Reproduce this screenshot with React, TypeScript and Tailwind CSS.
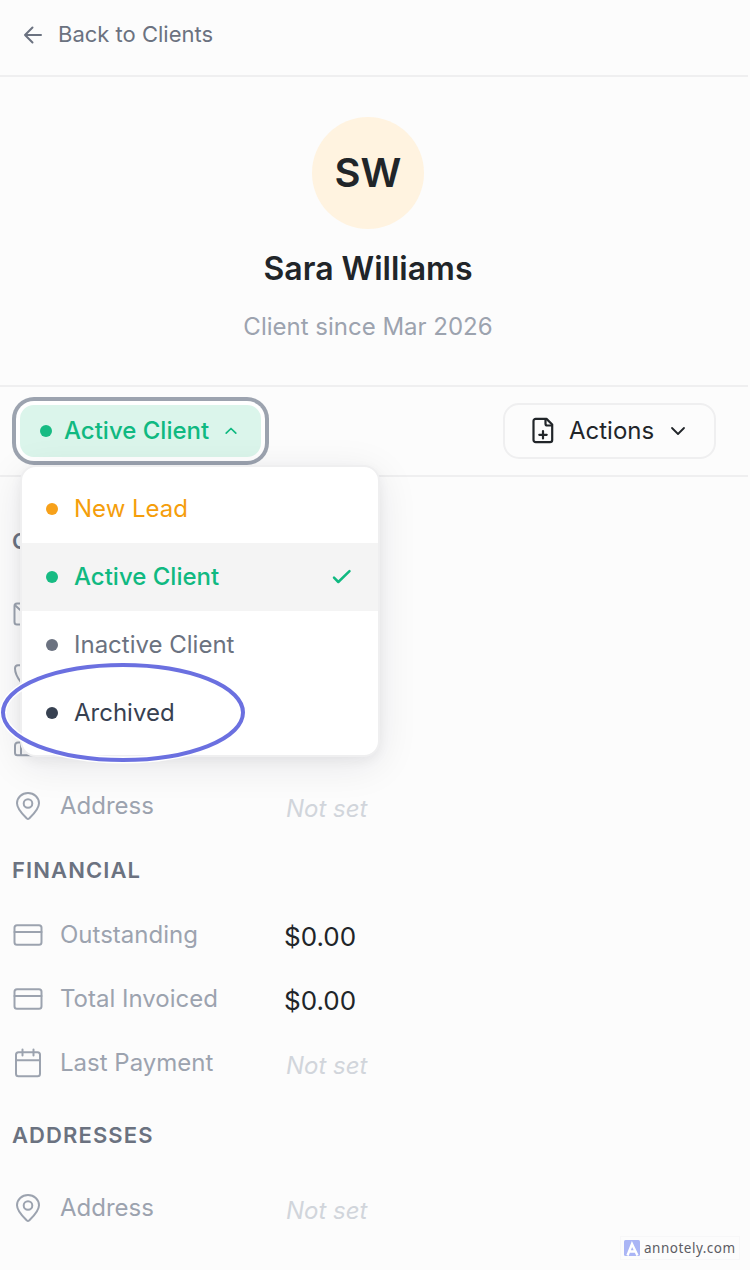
import React from 'react';

type IconProps = { className?: string };

const Svg: React.FC<{ size?: number; stroke?: number; className?: string; children: React.ReactNode }> = ({
  size = 32,
  stroke = 2,
  className,
  children,
}) => (
  <svg
    width={size}
    height={size}
    viewBox={`0 0 ${size} ${size}`}
    fill="none"
    stroke="currentColor"
    strokeWidth={stroke}
    strokeLinecap="round"
    strokeLinejoin="round"
    className={className}
    aria-hidden="true"
  >
    {children}
  </svg>
);

const PinIcon: React.FC<IconProps> = (props) => (
  <Svg {...props}>
    <path d="M15 28.600C13 26.500 5 19.700 5 13.300a11 10.300 0 0 1 22 0c0 6.400-8 13.200-10 15.300q-1 1-2 0z" />
    <circle cx="16" cy="13.500" r="4.300" />
  </Svg>
);

const CardIcon: React.FC<IconProps> = (props) => (
  <Svg {...props}>
    <rect x="2.500" y="6.300" width="27" height="19.400" rx="2.500" />
    <path d="M2.500 13h27" />
  </Svg>
);

const CalendarIcon: React.FC<IconProps> = (props) => (
  <Svg {...props}>
    <rect x="4" y="5.300" width="24" height="24" rx="2.500" />
    <path d="M4 13.300h24M10.500 2.500v6M21.500 2.500v6" />
  </Svg>
);

const MailIcon: React.FC<IconProps> = (props) => (
  <Svg {...props}>
    <rect x="2.500" y="5.500" width="27" height="21" rx="2.500" />
    <path d="M3 7.200l5 4.500 8 6.500 8-6.500 5-4.500" />
  </Svg>
);

const PhoneIcon: React.FC<IconProps> = (props) => (
  <Svg {...props}>
    <path d="M10 3.200H6a3.200 3.200 0 0 0-3 3.200c0 3.800 2.500 9.300 6 13.800 4 4.500 9 7.500 16 8a3 3 0 0 0 3-3v-4l-7-3-3 3.500a17 17 0 0 1-7-7l3.500-3z" />
  </Svg>
);

const CompanyIcon: React.FC<IconProps> = (props) => (
  <Svg {...props}>
    <path d="M9 29.200V5h14v24.200M9 16.500H6a3.200 3.200 0 0 0-3 3.200v7a2.500 2.500 0 0 0 2.500 2.500H30" />
  </Svg>
);

interface DetailRow {
  icon: React.FC<IconProps>;
  label: string;
  value?: string;
}

const contact: DetailRow[] = [
  { icon: MailIcon, label: 'Email' },
  { icon: PhoneIcon, label: 'Phone' },
  { icon: CompanyIcon, label: 'Company' },
  { icon: PinIcon, label: 'Address' },
];

const financial: DetailRow[] = [
  { icon: CardIcon, label: 'Outstanding', value: '$0.00' },
  { icon: CardIcon, label: 'Total Invoiced', value: '$0.00' },
  { icon: CalendarIcon, label: 'Last Payment' },
];

const addresses: DetailRow[] = [{ icon: PinIcon, label: 'Address' }];

const statuses = [
  { label: 'New Lead', text: 'text-[#f59e0b]', dot: 'bg-[#f7a11a]' },
  { label: 'Active Client', text: 'text-[#10b981] font-medium', dot: 'bg-[#17bb83]', selected: true },
  { label: 'Inactive Client', text: 'text-[#6b7280]', dot: 'bg-[#6b7280]' },
  { label: 'Archived', text: 'text-[#374151]', dot: 'bg-[#374151]' },
];

const Row: React.FC<{ row: DetailRow }> = ({ row }) => {
  const Icon = row.icon;
  return (
    <div className="flex h-16 items-center pl-3">
      <Icon className="shrink-0 text-[#9ca3af]" />
      <span className="ml-4 w-[224px] text-[24px] text-[#9ca3af]">{row.label}</span>
      {row.value ? (
        <span className="pt-[3px] text-[26px] text-[#212529]">{row.value}</span>
      ) : (
        <span className="pl-[2px] pt-[5px] text-[24px] italic text-[#d1d5db]">Not set</span>
      )}
    </div>
  );
};

const SectionTitle: React.FC<{ className: string; children: React.ReactNode }> = ({ className, children }) => (
  <h2 className={`flex items-center pl-3 text-[22px] font-semibold tracking-[1.100px] text-[#6b7280] ${className}`}>
    {children}
  </h2>
);

const StatusMenu = () => (
  <div className="absolute left-0 top-[60px] z-10 w-[360px] rounded-2xl border-2 border-[#efeff0] bg-white py-2 shadow-[0_8px_40px_rgba(17,24,39,0.09),0_4px_12px_rgba(17,24,39,0.05)]">
    {statuses.map((s) => (
      <div key={s.label} className={`flex h-[68px] items-center pl-6 pr-5 ${s.selected ? 'bg-[#f4f4f4]' : ''}`}>
        <span className={`size-3 rounded-full ${s.dot}`} />
        <span className={`ml-4 flex-1 text-[24px] ${s.text}`}>{s.label}</span>
        {s.selected && (
          <Svg stroke={2.5} className="text-[#10b981]">
            <path d="M8 16.700l4.300 4.300L23.500 10.200" />
          </Svg>
        )}
      </div>
    ))}
    <svg className="absolute -left-6 top-[192px]" width="252" height="108" viewBox="0 0 252 108" fill="none">
      <ellipse cx="125" cy="53.500" rx="120" ry="47.500" stroke="white" strokeWidth="7" />
      <ellipse cx="125" cy="53.500" rx="120" ry="47.500" stroke="#6b70e0" strokeWidth="4" />
    </svg>
  </div>
);

export default function App() {
  return (
    <div
      className="relative h-[1270px] w-[750px] overflow-hidden bg-[#fcfcfc] leading-none"
      style={{ fontFamily: 'Inter, sans-serif' }}
    >
      <div className="w-[748px]">
        <header className="flex h-[77px] items-center border-b-2 border-[#efeff0] pb-[6px] pl-[17px] text-[#6b7280]">
          <Svg>
            <path d="M24 16H8M15.500 8.500L8 16l7.500 7.500" />
          </Svg>
          <span className="ml-[9px] pb-[2px] text-[22px]">Back to Clients</span>
        </header>

        <section className="flex h-[310px] flex-col items-center border-b-2 border-[#efeff0] pr-3 pt-10">
          <div className="flex size-28 items-center justify-center rounded-full bg-[#fff3e0] pb-px text-[40px] font-semibold text-[#212529]">
            SW
          </div>
          <h1 className="mt-6 text-[32px] font-semibold text-[#212529]">Sara Williams</h1>
          <p className="mt-[30px] text-[24px] text-[#9ca3af]">Client since Mar 2026</p>
        </section>

        <div className="flex h-[90px] items-center justify-between border-b-2 border-[#efeff0] pl-5 pr-8">
          <div className="relative">
            <button className="flex h-[52px] w-[241px] items-center rounded-[14px] bg-[#dbf5eb] pl-5 text-[#10b981] ring-4 ring-[#9ca3af] ring-offset-4 ring-offset-white">
              <span className="size-3 rounded-full bg-[#17bb83]" />
              <span className="ml-3 text-[24px] font-medium">Active Client</span>
              <Svg size={20} stroke={1.7} className="ml-3">
                <path d="M5.200 12.200L10 7.500l4.800 4.700" />
              </Svg>
            </button>
            <StatusMenu />
          </div>
          <button className="flex h-14 w-[213px] items-center rounded-[16px] border-2 border-[#efeff0] pl-[22px] text-[#212529]">
            <Svg stroke={2.2}>
              <path d="M19.500 3.900H8.700a2.200 2.200 0 0 0-2.200 2.200v18.900a2.200 2.200 0 0 0 2.200 2.200h14.300a2.200 2.200 0 0 0 2.200-2.200V9.500z" />
              <path d="M18.500 4.200v4.500a1.800 1.800 0 0 0 1.800 1.800h4.500M16 16v7.500M12.300 19.800h7.400" />
            </Svg>
            <span className="ml-[10px] text-[24px]">Actions</span>
            <Svg size={24} stroke={1.8} className="ml-3">
              <path d="M6 9l6 6 6-6" />
            </Svg>
          </button>
        </div>

        <SectionTitle className="h-[128px]">CONTACT</SectionTitle>
        <div className="-mt-[23px]">
          {contact.map((row) => (
            <Row key={row.label} row={row} />
          ))}
        </div>
        <SectionTitle className="h-[65px] pb-px">FINANCIAL</SectionTitle>
        {financial.map((row) => (
          <Row key={row.label} row={row} />
        ))}
        <SectionTitle className="h-[81px] pb-px">ADDRESSES</SectionTitle>
        {addresses.map((row) => (
          <Row key={row.label} row={row} />
        ))}
      </div>

      <div className="absolute bottom-[10px] right-[10px] flex h-6 w-[120px] items-center gap-1 border border-[#f7f7f8] pl-[3px]">
        <svg className="shrink-0" width="16" height="16" viewBox="0 0 16 16" fill="none">
          <rect width="16" height="16" rx="1.500" fill="#aab5f5" />
          <path d="M3.500 15.500L8 4l5.500 11.500M6 11.500h6" stroke="white" strokeWidth="2.400" />
        </svg>
        <span
          className="pt-[2px] text-[13.500px] tracking-[0.500px] text-[#5c5c64]"
          style={{ fontFamily: '"Noto Sans", sans-serif' }}
        >
          annotely.com
        </span>
      </div>
    </div>
  );
}
